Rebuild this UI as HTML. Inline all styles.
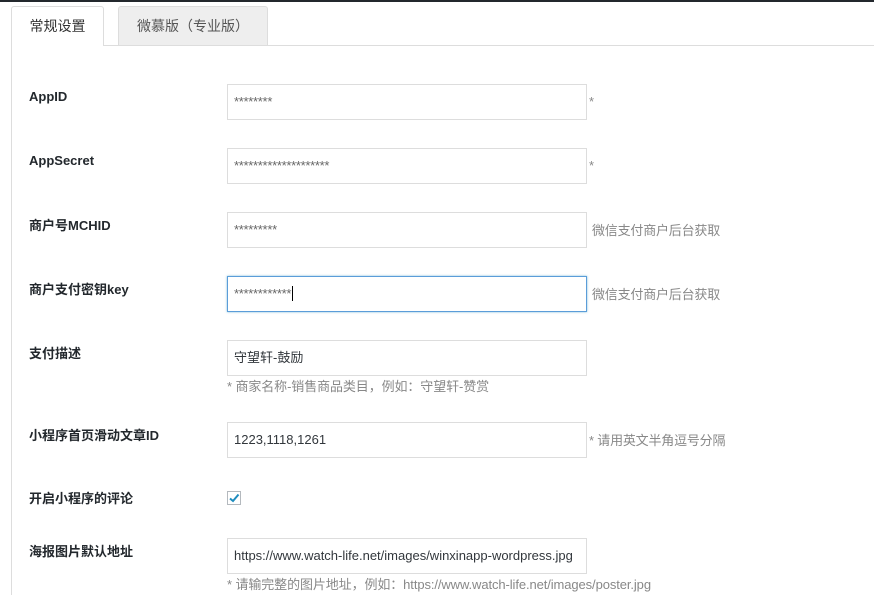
<!DOCTYPE html>
<html><head><meta charset="utf-8"><style>
body{margin:0;width:874px;height:595px;overflow:hidden;background:#fff;font-family:"Liberation Sans","Noto Sans CJK SC",sans-serif;font-size:13px;color:#23282d;position:relative}
.top{position:absolute;left:0;top:0;width:874px;height:2px;background:#23282d}
.tab{position:absolute;top:6px;height:39px;box-sizing:border-box;border:1px solid #ddd;border-bottom:none;border-radius:3px 3px 0 0;line-height:38px;text-align:center;font-size:14px;color:#333}
.panel{position:absolute;left:11px;top:45px;right:0;bottom:0;border-top:1px solid #ddd;border-left:1px solid #ddd}
.lbl{position:absolute;left:29px;font-weight:bold;font-size:13px;color:#23282d}
.in{position:absolute;left:227px;width:360px;height:36px;box-sizing:border-box;border:1px solid #ddd;padding-left:6px;line-height:34px;font-size:13px;color:#32373c;background:#fff}
.st{color:#666;font-size:13px;letter-spacing:-0.3px}
.side{position:absolute;left:592px;font-size:13px;color:#888;letter-spacing:-0.2px}
.hint{position:absolute;left:227px;font-size:13px;color:#888;letter-spacing:-0.1px}
</style></head><body>
<div class="top"></div>
<div class="panel"></div>
<div class="tab" style="left:11px;width:93px;background:#fff;height:40px">常规设置</div>
<div class="tab" style="left:118px;width:150px;background:#eee;color:#555">微慕版（专业版）</div>

<div class="lbl" style="top:89px">AppID</div>
<div class="in" style="top:84px"><span class="st">********</span></div>
<div class="side" style="left:589px;top:94px">*</div>

<div class="lbl" style="top:153px">AppSecret</div>
<div class="in" style="top:148px"><span class="st">********************</span></div>
<div class="side" style="left:589px;top:158px">*</div>

<div class="lbl" style="top:215px">商户号MCHID</div>
<div class="in" style="top:212px"><span class="st">*********</span></div>
<div class="side" style="top:220px">微信支付商户后台获取</div>

<div class="lbl" style="top:279px">商户支付密钥key</div>
<div class="in" style="top:276px;border-color:#5b9dd9;box-shadow:0 0 2px rgba(30,140,190,.6)"><span class="st">************</span><span style="border-left:1px solid #000;margin-left:1px"></span></div>
<div class="side" style="top:284px">微信支付商户后台获取</div>

<div class="lbl" style="top:343px">支付描述</div>
<div class="in" style="top:340px">守望轩-鼓励</div>
<div class="hint" style="top:376px">* 商家名称-销售商品类目，例如：守望轩-赞赏</div>

<div class="lbl" style="top:425px">小程序首页滑动文章ID</div>
<div class="in" style="top:422px">1223,1118,1261</div>
<div class="side" style="left:589px;top:430px">* 请用英文半角逗号分隔</div>

<div class="lbl" style="top:488px">开启小程序的评论</div>
<div style="position:absolute;left:227px;top:491px;width:14px;height:14px;box-sizing:border-box;border:1px solid #b4b9be;background:#fff">
<svg width="12" height="12" viewBox="0 0 12 12" style="position:absolute;left:0;top:0"><path d="M2 6.5L5 9L10.5 2.5" stroke="#1e8cbe" stroke-width="2" fill="none"/></svg></div>

<div class="lbl" style="top:541px">海报图片默认地址</div>
<div class="in" style="top:538px">https://www.watch-life.net/images/winxinapp-wordpress.jpg</div>
<div class="hint" style="top:574px">* 请输完整的图片地址，例如：https://www.watch-life.net/images/poster.jpg</div>
</body></html>
